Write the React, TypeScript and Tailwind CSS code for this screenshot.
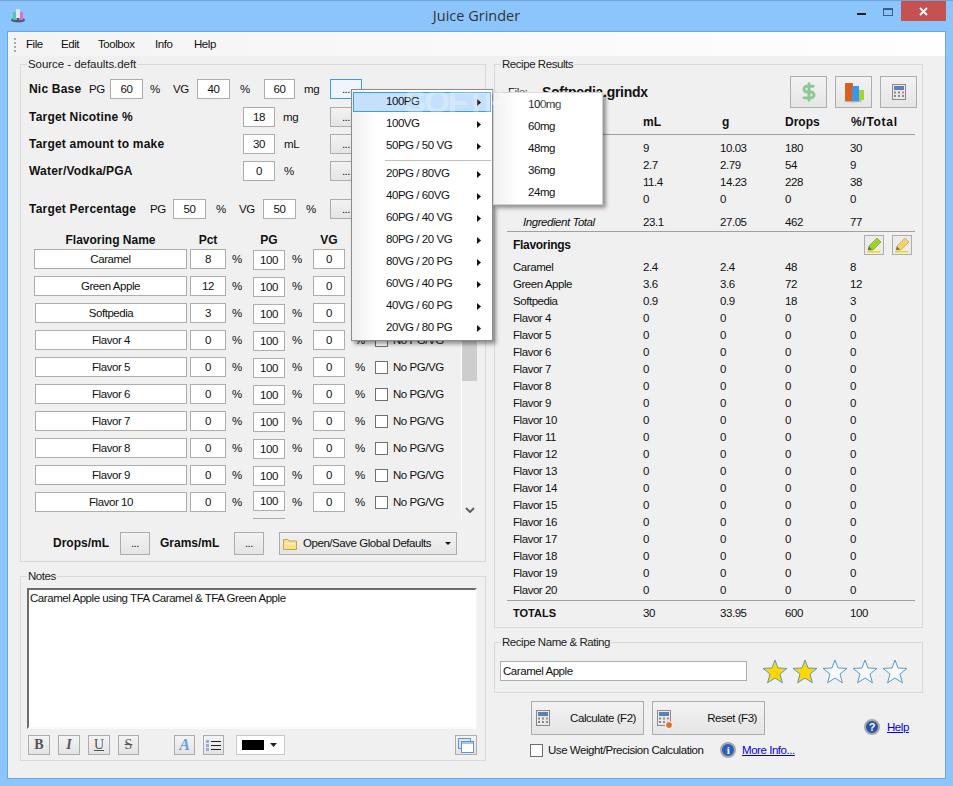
import React from "react";
import { DollarSign } from "lucide-react";

const flavors = ["Caramel", "Green Apple", "Softpedia", "Flavor 4", "Flavor 5", "Flavor 6", "Flavor 7", "Flavor 8", "Flavor 9", "Flavor 10"];
const pcts = ["8", "12", "3", "0", "0", "0", "0", "0", "0", "0"];

const ingredients = [
  ["Nicotine", "9", "10.03", "180", "30"],
  ["PG", "2.7", "2.79", "54", "9"],
  ["VG", "11.4", "14.23", "228", "38"],
  ["Water", "0", "0", "0", "0"],
];

const flavorResults = [
  ["Caramel", "2.4", "2.4", "48", "8"],
  ["Green Apple", "3.6", "3.6", "72", "12"],
  ["Softpedia", "0.9", "0.9", "18", "3"],
];
for (let i = 4; i <= 20; i++) flavorResults.push([`Flavor ${i}`, "0", "0", "0", "0"]);

const menuTop = ["100PG", "100VG", "50PG / 50 VG"];
const menuBottom = ["20PG / 80VG", "40PG / 60VG", "60PG / 40 VG", "80PG / 20 VG", "80VG / 20 PG", "60VG / 40 PG", "40VG / 60 PG", "20VG / 80 PG"];
const subMenu = ["100mg", "60mg", "48mg", "36mg", "24mg"];

const label = "font-bold text-[12px] tracking-[0.2px]";
const bold = "font-bold text-[12px] tracking-normal";
const btnFace = "border border-[#adadad] bg-linear-to-b from-[#f2f2f2] to-[#e5e5e5]";

function Field({ value, className = "" }: { value: string; className?: string }) {
  return (
    <div className={`h-[20px] shrink-0 bg-white border border-[#adadad] flex items-center justify-center ${className}`}>
      {value}
    </div>
  );
}

function Dots({ active = false }: { active?: boolean }) {
  return (
    <div
      className={`w-[32px] h-[20px] shrink-0 border flex items-center justify-center pb-[1px] ${
        active ? "border-[#3c9ae6] bg-[#eef5fc]" : "border-[#adadad] bg-linear-to-b from-[#f2f2f2] to-[#e5e5e5]"
      }`}
    >
      ...
    </div>
  );
}

function Group({ title, className = "", titleClass = "", children }: { title: string; className?: string; titleClass?: string; children: React.ReactNode }) {
  return (
    <div className={`relative border border-[#d9d9d9] ${className}`}>
      <div className={`absolute left-[6px] top-[-8px] bg-[#f0f0f0] px-[1px] leading-[15px] text-[#222] ${titleClass}`}>{title}</div>
      {children}
    </div>
  );
}

function Checkbox() {
  return <div className="w-[13px] h-[13px] shrink-0 bg-white border border-[#707070]" />;
}

function ToolBtn({ children, className = "" }: { children: React.ReactNode; className?: string }) {
  return (
    <div className={`h-[20px] shrink-0 border border-[#adadad] bg-linear-to-b from-[#f3f3f3] to-[#e4e4e4] flex items-center justify-center ${className}`}>
      {children}
    </div>
  );
}

function ResultRow({ cells }: { cells: string[] }) {
  return (
    <div className="flex items-center h-[17px] pl-[6px]">
      <div className="w-[130px]">{cells[0]}</div>
      <div className="w-[77px]">{cells[1]}</div>
      <div className="w-[65px]">{cells[2]}</div>
      <div className="w-[65px]">{cells[3]}</div>
      <div>{cells[4]}</div>
    </div>
  );
}

function Arrow() {
  return (
    <svg width="4" height="7" viewBox="0 0 4 7" className="absolute right-[10px] top-[8px]">
      <polygon points="0,0 4,3.5 0,7" fill="#111" />
    </svg>
  );
}

function CalcIcon({ className = "" }: { className?: string }) {
  return (
    <svg width="14" height="16" viewBox="0 0 14 16" className={className}>
      <rect x="0.5" y="0.5" width="13" height="15" fill="#e8e8e8" stroke="#8a8a8a" />
      <rect x="2" y="2" width="10" height="4" fill="#5c80b8" />
      <rect x="2" y="7.5" width="2" height="2" fill="#8a8a8a" />
      <rect x="6" y="7.5" width="2" height="2" fill="#8a8a8a" />
      <rect x="10" y="7.5" width="2" height="2" fill="#d87a7a" />
      <rect x="2" y="11" width="2" height="2" fill="#8a8a8a" />
      <rect x="6" y="11" width="2" height="2" fill="#8a8a8a" />
      <rect x="10" y="11" width="2" height="2" fill="#8a8a8a" />
    </svg>
  );
}

function PencilIcon({ body, tip }: { body: string; tip: string }) {
  return (
    <svg width="16" height="16" viewBox="0 0 16 16">
      <polygon points="11,1 15,5 7,13 2,13 3,9" fill={body} stroke={tip} strokeWidth="0.6" />
      <polygon points="3,9.5 6,12.5 2,13" fill="#666" />
      <rect x="1" y="14" width="13" height="1.5" fill="#f5d800" />
    </svg>
  );
}

function Star({ filled }: { filled: boolean }) {
  return (
    <svg width="26" height="25" viewBox="0 0 26 25">
      <polygon
        points="13,1 16,9 25,9.4 18,15 20.4,23.8 13,19 5.6,23.8 8,15 1,9.4 10,9"
        fill={filled ? "#ffd800" : "#f8fbfd"}
        stroke="#5b98cc"
        strokeWidth="1"
      />
    </svg>
  );
}

export default function App() {
  return (
    <div className="relative w-[953px] h-[786px] overflow-hidden bg-[#8cc5fb] border-t border-[#6fa5d8] font-['Liberation_Sans',sans-serif] text-[11.5px] leading-[14px] tracking-[-0.45px] whitespace-nowrap text-[#111]">
      {/* title bar */}
      <div className="relative h-[30px] flex items-center justify-center">
        <svg width="16" height="16" viewBox="0 0 16 16" className="absolute left-[10px] top-[6px]">
          <ellipse cx="8" cy="13" rx="7" ry="2.5" fill="#4a5a78" />
          <rect x="3" y="5" width="4" height="8" fill="#4fc8b0" />
          <rect x="9" y="5" width="4" height="8" fill="#d870c8" />
          <rect x="6" y="2" width="4" height="9" fill="#dfe8f2" />
        </svg>
        <span className="text-[14.5px] leading-[20px] tracking-normal text-[#333] font-['Open_Sans',sans-serif]">Juice Grinder</span>
        <div className="absolute left-[857px] top-[12px] w-[9px] h-[2px] bg-[#222]" />
        <div className="absolute left-[883px] top-[7px] w-[10px] h-[8px] border border-[#3d5f85] border-t-2" />
        <div className="absolute left-[901px] top-0 w-[45px] h-[20px] bg-[#c75050] flex items-center justify-center">
          <svg width="9" height="9" viewBox="0 0 9 9">
            <path d="M1 1L8 8M8 1L1 8" stroke="#fff" strokeWidth="1.8" />
          </svg>
        </div>
      </div>

      {/* client area */}
      <div className="mx-[7px] h-[748px] border border-[#6ea6dc] bg-[#f0f0f0]">
        {/* menu bar */}
        <div className="relative h-[24px] bg-linear-to-r from-[#f4f4f4] to-[#fefefe] flex items-center">
          <div className="absolute left-[6px] top-[6px] flex flex-col gap-[2px]">
            <div className="w-[2px] h-[2px] bg-[#a8a8a8]" />
            <div className="w-[2px] h-[2px] bg-[#a8a8a8]" />
            <div className="w-[2px] h-[2px] bg-[#a8a8a8]" />
            <div className="w-[2px] h-[2px] bg-[#a8a8a8]" />
          </div>
          <span className="ml-[18px] w-[35px]">File</span>
          <span className="w-[37px]">Edit</span>
          <span className="w-[57px]">Toolbox</span>
          <span className="w-[39px]">Info</span>
          <span>Help</span>
        </div>

        <div className="flex pl-[12px] pt-[8px]">
          {/* left column */}
          <div className="w-[466px] shrink-0">
            <Group title="Source - defaults.deft" titleClass="tracking-[-0.05px]" className="h-[498px]">
              <div className="pl-[8px] pt-[14px]">
                <div className="flex items-center h-[20px]">
                  <div className={`w-[60px] ${label}`}>Nic Base</div>
                  <div className="w-[21px]">PG</div>
                  <Field value="60" className="w-[33px]" />
                  <div className="w-[30px] pl-[7px]">%</div>
                  <div className="w-[24px]">VG</div>
                  <Field value="40" className="w-[33px]" />
                  <div className="w-[34px] pl-[10px]">%</div>
                  <Field value="60" className="w-[31px]" />
                  <div className="w-[35px] pl-[9px]">mg</div>
                  <Dots active />
                </div>
                <div className="flex items-center h-[20px] mt-[8px]">
                  <div className={`w-[214px] ${label}`}>Target Nicotine %</div>
                  <Field value="18" className="w-[32px]" />
                  <div className="w-[55px] pl-[8px]">mg</div>
                  <Dots />
                </div>
                <div className="flex items-center h-[20px] mt-[7px]">
                  <div className={`w-[214px] ${label}`}>Target amount to make</div>
                  <Field value="30" className="w-[32px]" />
                  <div className="w-[55px] pl-[9px]">mL</div>
                  <Dots />
                </div>
                <div className="flex items-center h-[20px] mt-[7px]">
                  <div className={`w-[214px] ${label}`}>Water/Vodka/PGA</div>
                  <Field value="0" className="w-[32px]" />
                  <div className="w-[55px] pl-[9px]">%</div>
                  <Dots />
                </div>
                <div className="flex items-center h-[20px] mt-[18px]">
                  <div className={`w-[121px] ${label}`}>Target Percentage</div>
                  <div className="w-[23px]">PG</div>
                  <Field value="50" className="w-[33px]" />
                  <div className="w-[33px] pl-[10px]">%</div>
                  <div className="w-[24px]">VG</div>
                  <Field value="50" className="w-[33px]" />
                  <div className="w-[34px] pl-[10px]">%</div>
                  <Dots />
                </div>
              </div>

              {/* flavor table */}
              <div className="flex pl-[13px] mt-[13px]">
                <div className="w-[427px] shrink-0">
                  <div className="flex h-[16px] mb-[1px] items-center font-bold text-[12px] tracking-normal text-center">
                    <div className="w-[153px]">Flavoring Name</div>
                    <div className="ml-[3px] w-[36px]">Pct</div>
                    <div className="ml-[27px] w-[32px]">PG</div>
                    <div className="ml-[28px] w-[32px]">VG</div>
                  </div>
                  <div className="h-[270px]">
                    {flavors.map((name, i) => (
                      <div key={name} className="flex items-center h-[20px] mb-[7px]">
                        <Field value={name} className={i < 2 ? "w-[153px]" : "ml-[1px] w-[152px]"} />
                        <Field value={pcts[i]} className="ml-[3px] w-[36px]" />
                        <div className="w-[27px] pl-[6px]">%</div>
                        <Field value="100" className={i === 9 ? "w-[32px] mb-[2px]" : "w-[32px] mt-[2px]"} />
                        <div className="w-[28px] pl-[7px]">%</div>
                        <Field value="0" className="w-[32px]" />
                        <div className="w-[30px] pl-[10px]">%</div>
                        <Checkbox />
                        <div className="ml-[5px]">No PG/VG</div>
                      </div>
                    ))}
                    <div className="ml-[219px] -mt-[1px] w-[32px] h-[1px] bg-[#adadad]" />
                  </div>
                </div>
                <div className="w-[16px] h-[287px] border-l border-white flex flex-col">
                  <div className="h-[149px] bg-[#cdcdcd]" />
                  <svg width="10" height="6" viewBox="0 0 10 6" className="ml-[3px] mt-[126px]">
                    <path d="M1 1L5 5L9 1" fill="none" stroke="#606060" strokeWidth="2" />
                  </svg>
                </div>
              </div>

              <div className="flex items-center h-[24px] mt-[12px] pl-[32px]">
                <div className={`w-[67px] ${bold}`}>Drops/mL</div>
                <div className={`w-[30px] h-[23px] flex items-center justify-center ${btnFace}`}>...</div>
                <div className={`w-[84px] pl-[10px] ${bold}`}>Grams/mL</div>
                <div className={`w-[30px] h-[23px] flex items-center justify-center ${btnFace}`}>...</div>
                <div className={`relative ml-[15px] w-[178px] h-[23px] flex items-center pl-[23px] ${btnFace}`}>
                  <svg width="14" height="12" viewBox="0 0 14 12" className="absolute left-[3px] top-[5px]">
                    <path d="M0.5 1.5H5L6 3H13.5V11.5H0.5Z" fill="#fbe08a" stroke="#c9a24a" />
                    <rect x="1.5" y="5" width="11" height="1.5" fill="#fff6cf" />
                  </svg>
                  Open/Save Global Defaults
                  <svg width="6" height="3" viewBox="0 0 6 3" className="absolute right-[5px] top-[9px]">
                    <polygon points="0,0 6,0 3,3" fill="#111" />
                  </svg>
                </div>
              </div>
            </Group>

            <Group title="Notes" className="mt-[14px] h-[185px]">
              <div className="ml-[6px] mt-[11px] w-[450px] h-[141px] bg-white border-2 border-t-[#6d6d6d] border-l-[#6d6d6d] border-r-[#fafafa] border-b-[#fafafa] pl-[1px] pt-[1px] leading-[15px]">
                Caramel Apple using TFA Caramel &amp; TFA Green Apple
              </div>
              <div className="flex items-center h-[20px] mt-[6px] ml-[7px] tracking-normal">
                <ToolBtn className="w-[22px]"><span className="font-['Liberation_Serif',serif] font-bold text-[14px] text-[#555]">B</span></ToolBtn>
                <ToolBtn className="ml-[8px] w-[22px]"><span className="font-['Liberation_Serif',serif] italic font-bold text-[14px] text-[#555]">I</span></ToolBtn>
                <ToolBtn className="ml-[8px] w-[22px]"><span className="font-['Liberation_Serif',serif] underline text-[14px] text-[#555]">U</span></ToolBtn>
                <ToolBtn className="ml-[8px] w-[21px]"><span className="font-['Liberation_Serif',serif] line-through text-[14px] text-[#555]">S</span></ToolBtn>
                <ToolBtn className="ml-[35px] w-[21px]"><span className="font-['Liberation_Serif',serif] italic font-bold text-[16px] text-[#6a9be0]">A</span></ToolBtn>
                <ToolBtn className="ml-[8px] w-[21px]">
                  <svg width="15" height="13" viewBox="0 0 15 13">
                    <rect x="0" y="1" width="3" height="3" fill="#8fb0e0" />
                    <rect x="0" y="5" width="3" height="3" fill="#8fb0e0" />
                    <rect x="0" y="9" width="3" height="3" fill="#8fb0e0" />
                    <rect x="5" y="2" width="10" height="1" fill="#222" />
                    <rect x="5" y="6" width="10" height="1" fill="#222" />
                    <rect x="5" y="10" width="10" height="1" fill="#222" />
                  </svg>
                </ToolBtn>
                <div className="relative ml-[12px] w-[49px] h-[20px] bg-white border border-[#c8c8c8] flex items-center pl-[5px]">
                  <div className="w-[22px] h-[10px] bg-black" />
                  <svg width="7" height="4" viewBox="0 0 7 4" className="absolute right-[7px] top-[7px]">
                    <polygon points="0,0 7,0 3.5,4" fill="#222" />
                  </svg>
                </div>
                <ToolBtn className="ml-[170px] w-[22px]">
                  <svg width="16" height="15" viewBox="0 0 16 15">
                    <rect x="0.5" y="0.5" width="12" height="10" fill="#d8e6f6" stroke="#6a94c8" />
                    <rect x="3.5" y="3.5" width="12" height="11" fill="#fff" stroke="#6a94c8" />
                    <rect x="4" y="4" width="11" height="2" fill="#a8c4e8" />
                  </svg>
                </ToolBtn>
              </div>
            </Group>
          </div>

          {/* right column */}
          <div className="ml-[8px] w-[429px] shrink-0">
            <Group title="Recipe Results" className="h-[564px]">
              <div className="flex items-center h-[32px] mt-[11px]">
                <div className="ml-[13px] w-[34px]">File:</div>
                <div className="font-bold text-[14px] leading-[16px] tracking-[-0.3px]">Softpedia.grindx</div>
                <div className="ml-auto mr-[5px] flex gap-[8px]">
                  <div className={`w-[37px] h-[32px] flex items-center justify-center ${btnFace}`}>
                    <DollarSign size={20} strokeWidth={3.5} className="text-[#8cc796]" />
                  </div>
                  <div className={`w-[37px] h-[32px] flex items-center justify-center ${btnFace}`}>
                    <svg width="22" height="21" viewBox="0 0 22 21">
                      <ellipse cx="10" cy="19" rx="9" ry="1.5" fill="#b0b0b0" />
                      <rect x="2" y="1" width="8" height="18" rx="1" fill="#d9601c" />
                      <rect x="9" y="4" width="7" height="15" fill="#3d95ea" />
                      <rect x="16" y="8" width="5" height="10" fill="#a4d23a" />
                    </svg>
                  </div>
                  <div className={`w-[37px] h-[32px] flex items-center justify-center ${btnFace}`}>
                    <CalcIcon />
                  </div>
                </div>
              </div>

              <div className="ml-[12px] w-[408px]">
                <div className={`flex items-center h-[17px] mt-[5px] pl-[6px] ${bold}`}>
                  <div className="w-[130px]" />
                  <div className="w-[79px]">mL</div>
                  <div className="w-[63px]">g</div>
                  <div className="w-[66px]">Drops</div>
                  <div className="tracking-[0.7px]">%/Total</div>
                </div>
                <div className="h-[1px] bg-[#a0a0a0] mt-[4px]" />
                <div className="mt-[4px]">
                  {ingredients.map((row) => (
                    <ResultRow key={row[0]} cells={row} />
                  ))}
                </div>
                <div className="flex items-center h-[17px] mt-[6px] pl-[16px]">
                  <div className="w-[120px] italic">Ingredient Total</div>
                  <div className="w-[77px]">23.1</div>
                  <div className="w-[65px]">27.05</div>
                  <div className="w-[65px]">462</div>
                  <div>77</div>
                </div>
                <div className="h-[1px] bg-[#a0a0a0] mt-[1px]" />
                <div className="flex items-center h-[20px] mt-[3px] pl-[6px]">
                  <div className="font-bold text-[12px] tracking-[-0.3px]">Flavorings</div>
                  <div className="ml-auto mr-[3px] flex gap-[8px]">
                    <div className="w-[20px] h-[20px] border border-[#adadad] bg-[#ececec] flex items-center justify-center">
                      <PencilIcon body="#9bd32a" tip="#5f9a10" />
                    </div>
                    <div className="w-[20px] h-[20px] border border-[#adadad] bg-[#ececec] flex items-center justify-center">
                      <PencilIcon body="#f2d16b" tip="#c49a30" />
                    </div>
                  </div>
                </div>
                <div className="mt-[3px]">
                  {flavorResults.map((row) => (
                    <ResultRow key={row[0]} cells={row} />
                  ))}
                </div>
                <div className="h-[1px] bg-[#a0a0a0] mt-[2px]" />
                <div className="flex items-center h-[17px] mt-[3px] pl-[6px]">
                  <div className="w-[130px] font-bold text-[11px] tracking-normal">TOTALS</div>
                  <div className="w-[77px]">30</div>
                  <div className="w-[65px]">33.95</div>
                  <div className="w-[65px]">600</div>
                  <div>100</div>
                </div>
              </div>
            </Group>

            <Group title="Recipe Name & Rating" className="mt-[14px] h-[51px]">
              <div className="flex items-center h-[20px] mt-[18px] ml-[5px]">
                <div className="w-[247px] h-[20px] bg-white border border-[#adadad] flex items-center pl-[2px]">Caramel Apple</div>
                <div className="ml-[15px] flex gap-[4px]">
                  <Star filled />
                  <Star filled />
                  <Star filled={false} />
                  <Star filled={false} />
                  <Star filled={false} />
                </div>
              </div>
            </Group>

            <div className="flex mt-[8px] ml-[37px] h-[34px]">
              <div className={`relative w-[113px] h-[34px] flex items-center justify-end pr-[7px] ${btnFace}`}>
                <CalcIcon className="absolute left-[4px] top-[8px]" />
                Calculate (F2)
              </div>
              <div className={`relative ml-[8px] w-[113px] h-[34px] flex items-center justify-end pr-[7px] ${btnFace}`}>
                <CalcIcon className="absolute left-[4px] top-[8px]" />
                <div className="absolute left-[12px] top-[19px] w-[8px] h-[8px] rounded-full bg-[#e0702a] border border-white" />
                Reset (F3)
              </div>
              <div className="ml-[99px] mt-[18px] flex items-center h-[16px]">
                <div className="w-[16px] h-[16px] rounded-full bg-[#2a4fa8] border-2 border-[#a8a8a8] flex items-center justify-center text-white font-bold text-[11px] leading-none">?</div>
                <span className="ml-[7px] text-[#0000ee] underline">Help</span>
              </div>
            </div>
            <div className="flex items-center h-[16px] mt-[7px] ml-[36px]">
              <Checkbox />
              <span className="ml-[5px] w-[172px]">Use Weight/Precision Calculation</span>
              <div className="w-[16px] h-[16px] rounded-full bg-[#2a5ec0] border-2 border-[#a8a8a8] flex items-center justify-center text-white font-bold text-[11px] leading-none font-['Liberation_Serif',serif]">i</div>
              <span className="ml-[6px] text-[#0000ee] underline">More Info...</span>
            </div>
          </div>
        </div>
      </div>

      {/* open context menu */}
      <div className="absolute left-[351px] top-[88px] w-[142px] h-[252px] bg-white border border-[#8c8c8c] shadow-[3px_3px_4px_rgba(0,0,0,0.4)] p-[1px]">
        <div className="absolute left-0 top-0 bottom-0 w-[24px] bg-linear-to-r from-[#efefef] to-white" />
        <div className="relative">
          {menuTop.map((item, i) => (
            <div key={item} className="relative h-[22px] flex items-center pl-[33px] pb-[2px]">
              {i === 0 && <div className="absolute inset-x-0 inset-y-[1px] border border-[#3d9ce8] bg-[#c4e0fc]" />}
              <span className="relative">{item}</span>
              <Arrow />
            </div>
          ))}
          <div className="h-[1px] bg-[#c0c0c0] ml-[32px] mt-[3px] mb-[2px]" />
          {menuBottom.map((item) => (
            <div key={item} className="relative h-[22px] flex items-center pl-[33px] pb-[2px]">
              {item}
              <Arrow />
            </div>
          ))}
        </div>
      </div>
      <div className="absolute left-[493px] top-[91px] w-[110px] h-[113px] bg-white border border-[#d0d0d0] shadow-[3px_3px_4px_rgba(0,0,0,0.4)]">
        <div className="absolute left-0 top-0 bottom-0 w-[24px] bg-linear-to-r from-[#f0f0f0] to-white" />
        {subMenu.map((item) => (
          <div key={item} className="relative h-[22px] flex items-center pl-[34px]">
            {item}
          </div>
        ))}
      </div>

      {/* watermark */}
      <div className="absolute left-[404px] top-[83px] font-bold text-[33px] leading-[36px] tracking-[-2px] text-white/30 pointer-events-none">SOFTPEDIA</div>
    </div>
  );
}
